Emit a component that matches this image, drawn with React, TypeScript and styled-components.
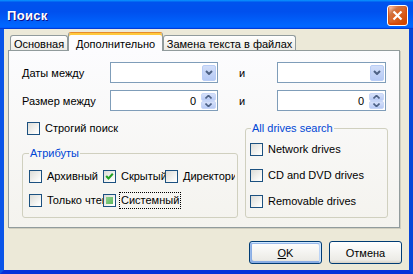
import React from "react";
import styled, { createGlobalStyle, css } from "styled-components";

const GlobalStyle = createGlobalStyle`
  html, body {
    margin: 0;
    padding: 0;
  }
  body {
    font-family: "Liberation Sans", Arial, sans-serif;
    font-size: 11px;
    color: #000;
  }
`;

const Window = styled.div`
  width: 413px;
  height: 274px;
  display: flex;
  flex-direction: column;
`;

const TitleBar = styled.div`
  height: 29px;
  flex: none;
  box-sizing: border-box;
  display: flex;
  align-items: center;
  justify-content: space-between;
  padding: 1px 5px 0 7px;
  background: linear-gradient(
    180deg,
    #0997ff,
    #0053ee 8%,
    #0050ee 40%,
    #0066ff 88%,
    #0066ff 93%,
    #005bff 95%,
    #003dd7 96%,
    #003dd7
  );
`;

const Title = styled.span`
  color: #fff;
  font: bold 13px "Liberation Sans", Arial, sans-serif;
  text-shadow: 1px 1px #0f1089;
  letter-spacing: 0.3px;
`;

const CloseButton = styled.div`
  width: 21px;
  height: 21px;
  box-sizing: border-box;
  border: 1px solid #fff;
  border-radius: 3px;
  display: flex;
  align-items: center;
  justify-content: center;
  background: radial-gradient(
    circle at 90% 90%,
    #cc4600 0,
    #dc6527 55%,
    #cd7546 70%,
    #ffccb2 90%,
    #fff 100%
  );
  box-shadow: inset 0 -1px 2px 1px #da4600;
`;

const Body = styled.div`
  flex: 1;
  background: #ece9d8;
  border-left: 4px solid #0a55e8;
  border-right: 4px solid #0846d8;
  border-bottom: 4px solid #0831d9;
  padding: 3px 0 6px 0;
  display: flex;
  flex-direction: column;
`;

const TabStrip = styled.div`
  display: flex;
  align-items: flex-end;
  height: 19px;
  margin: 0 0 -1px 4px;
  padding-left: 2px;
`;

const Tab = styled.div<{ $active?: boolean; $w: number }>`
  width: ${(p) => p.$w}px;
  box-sizing: border-box;
  height: ${(p) => (p.$active ? 19 : 15)}px;
  margin-bottom: ${(p) => (p.$active ? 0 : 1)}px;
  border: 1px solid #919b9c;
  border-bottom: none;
  border-radius: 3px 3px 0 0;
  display: flex;
  align-items: center;
  justify-content: center;
  padding-top: 1px;
  white-space: nowrap;
  background: linear-gradient(180deg, #fff, #f3f2ed 60%, #ecebe6);
  ${(p) =>
    p.$active &&
    css`
      position: relative;
      z-index: 1;
      padding-top: 3px;
      border-top-color: #e68b2c;
      background: #fcfcfe;
      box-shadow: inset 0 2px #ffc83c;
    `}
`;

const Panel = styled.div`
  margin-left: 4px;
  width: 392px;
  height: 178px;
  box-sizing: border-box;
  border: 1px solid #919b9c;
  background: linear-gradient(180deg, #fcfcfe, #f4f3ee);
  box-shadow: 1px 1px 0 #d0cebf;
  padding: 11px 0 0 13px;
`;

const FieldGrid = styled.div`
  display: grid;
  grid-template-columns: 88px 108px 59px 109px;
  grid-auto-rows: 21px;
  row-gap: 7px;
  align-items: center;
`;

const FieldLabel = styled.span<{ $indent?: number }>`
  padding-left: ${(p) => p.$indent ?? 0}px;
  white-space: nowrap;
`;

const InputBox = styled.div`
  height: 21px;
  box-sizing: border-box;
  border: 1px solid #7f9db9;
  background: #fff;
  display: flex;
  align-items: center;
  justify-content: flex-end;
  padding-right: 1px;
`;

const DropButton = styled.div`
  width: 14px;
  height: 16px;
  box-sizing: border-box;
  border: 1px solid #b9cdf6;
  border-radius: 2px;
  background: linear-gradient(180deg, #d2def9, #b5c9f5);
  display: flex;
  align-items: center;
  justify-content: center;
`;

const SpinValue = styled.span`
  margin-right: 5px;
`;

const SpinButtons = styled.div`
  width: 15px;
  height: 16px;
  display: flex;
  flex-direction: column;
`;

const SpinHalf = styled.div`
  flex: 1;
  box-sizing: border-box;
  border: 1px solid #c7d6f7;
  border-radius: 2px;
  background: linear-gradient(180deg, #d6e1fa, #b7caf5);
  display: flex;
  align-items: center;
  justify-content: center;
`;

const Lower = styled.div`
  display: flex;
  gap: 7px;
  margin-top: 11px;
`;

const LeftCol = styled.div`
  width: 216px;
  display: flex;
  flex-direction: column;
  gap: 12px;
`;

const StrictRow = styled.div`
  margin-left: 5px;
`;

const Group = styled.fieldset<{ $h: number; $w?: number; $pad: string }>`
  margin: 0;
  min-inline-size: 0;
  box-sizing: border-box;
  height: ${(p) => p.$h}px;
  ${(p) => p.$w && `width: ${p.$w}px;`}
  padding: ${(p) => p.$pad};
  border: 1px solid #d0d0bf;
  border-radius: 3px;
`;

const Legend = styled.legend<{ $ml: number }>`
  margin-left: ${(p) => p.$ml}px;
  padding: 0 1px;
  line-height: 13px;
  color: #0046d5;
`;

const AttrGrid = styled.div`
  display: grid;
  grid-template-columns: 74px 62px 70px;
  row-gap: 11px;
`;

const DriveList = styled.div`
  display: flex;
  flex-direction: column;
  gap: 13px;
`;

const CheckItem = styled.label<{ $w?: number; $span?: number }>`
  display: flex;
  align-items: center;
  gap: 5px;
  height: 13px;
  line-height: 13px;
  white-space: nowrap;
  overflow: hidden;
  ${(p) => p.$w && `width: ${p.$w}px;`}
  ${(p) => p.$span && `grid-column: span ${p.$span}; overflow: visible;`}
`;

const Box = styled.span`
  flex: none;
  width: 13px;
  height: 13px;
  box-sizing: border-box;
  border: 1px solid #1c5180;
  background: linear-gradient(135deg, #dcdcd7, #fbfbf9 80%, #fff);
  display: flex;
  align-items: center;
  justify-content: center;
`;

const Mixed = styled.span`
  width: 7px;
  height: 7px;
  background: linear-gradient(135deg, #8fd18f, #5cb85c);
`;

const FocusText = styled.span`
  outline: 1px dotted #000;
  margin-left: -1px;
  padding: 0 1px;
  line-height: 15px;
`;

const ButtonRow = styled.div`
  display: flex;
  justify-content: flex-end;
  gap: 7px;
  margin-top: 13px;
  padding-right: 7px;
`;

const Button = styled.div<{ $default?: boolean }>`
  width: 73px;
  height: 23px;
  box-sizing: border-box;
  border: 1px solid #003c74;
  border-radius: 3px;
  display: flex;
  align-items: center;
  justify-content: center;
  background: linear-gradient(180deg, #fff, #ecebe6 86%, #d6d0c5);
  ${(p) =>
    p.$default &&
    css`
      box-shadow: inset -1px 1px #cee7ff, inset 1px 2px #98b8ea,
        inset -2px 2px #bcd4f6, inset 1px -1px #89ade4,
        inset 2px -2px #89ade4;
    `}
`;

const Chevron = () => (
  <svg width="8" height="5" viewBox="0 0 8 5">
    <polyline points="1,1 4,4 7,1" fill="none" stroke="#4d6185" strokeWidth="2" />
  </svg>
);

const SpinArrow = ({ up }: { up?: boolean }) => (
  <svg width="7" height="4" viewBox="0 0 7 4">
    <polyline
      points={up ? "0.5,3.5 3.5,0.5 6.5,3.5" : "0.5,0.5 3.5,3.5 6.5,0.5"}
      fill="none"
      stroke="#4d6185"
      strokeWidth="1.6"
    />
  </svg>
);

const Combo = () => (
  <InputBox>
    <DropButton>
      <Chevron />
    </DropButton>
  </InputBox>
);

const Spin = () => (
  <InputBox>
    <SpinValue>0</SpinValue>
    <SpinButtons>
      <SpinHalf>
        <SpinArrow up />
      </SpinHalf>
      <SpinHalf>
        <SpinArrow />
      </SpinHalf>
    </SpinButtons>
  </InputBox>
);

type CheckState = "off" | "on" | "mixed";

const Check = ({
  state = "off",
  w,
  span,
  focus,
  children,
}: {
  state?: CheckState;
  w?: number;
  span?: number;
  focus?: boolean;
  children: React.ReactNode;
}) => (
  <CheckItem $w={w} $span={span}>
    <Box>
      {state === "on" && (
        <svg width="9" height="9" viewBox="0 0 9 9">
          <polyline
            points="1.2,4 3.5,6.5 7.8,1.8"
            fill="none"
            stroke="#21a121"
            strokeWidth="2"
          />
        </svg>
      )}
      {state === "mixed" && <Mixed />}
    </Box>
    {focus ? <FocusText>{children}</FocusText> : <span>{children}</span>}
  </CheckItem>
);

export default function App() {
  return (
    <>
      <GlobalStyle />
      <Window>
        <TitleBar>
          <Title>Поиск</Title>
          <CloseButton>
            <svg width="11" height="11" viewBox="0 0 11 11">
              <path d="M1.5 1.5 L9.5 9.5 M9.5 1.5 L1.5 9.5" stroke="#fff" strokeWidth="2.2" />
            </svg>
          </CloseButton>
        </TitleBar>
        <Body>
          <TabStrip>
            <Tab $w={58}>Основная</Tab>
            <Tab $w={95} $active>
              Дополнительно
            </Tab>
            <Tab $w={133}>Замена текста в файлах</Tab>
          </TabStrip>
          <Panel>
            <FieldGrid>
              <FieldLabel>Даты между</FieldLabel>
              <Combo />
              <FieldLabel $indent={21}>и</FieldLabel>
              <Combo />
              <FieldLabel>Размер между</FieldLabel>
              <Spin />
              <FieldLabel $indent={21}>и</FieldLabel>
              <Spin />
            </FieldGrid>
            <Lower>
              <LeftCol>
                <StrictRow>
                  <Check>Строгий поиск</Check>
                </StrictRow>
                <Group $h={71} $pad="10px 6px 0">
                  <Legend $ml={0}>Атрибуты</Legend>
                  <AttrGrid>
                    <Check w={74}>Архивный</Check>
                    <Check w={62} state="on">
                      Скрытый
                    </Check>
                    <Check w={70}>Директория</Check>
                    <Check w={74}>Только чтение</Check>
                    <Check state="mixed" span={2} focus>
                      Системный
                    </Check>
                  </AttrGrid>
                </Group>
              </LeftCol>
              <Group $h={96} $w={143} $pad="8px 4px 0">
                <Legend $ml={1}>All drives search</Legend>
                <DriveList>
                  <Check>Network drives</Check>
                  <Check>CD and DVD drives</Check>
                  <Check>Removable drives</Check>
                </DriveList>
              </Group>
            </Lower>
          </Panel>
          <ButtonRow>
            <Button $default>
              <span>
                <u>O</u>K
              </span>
            </Button>
            <Button>Отмена</Button>
          </ButtonRow>
        </Body>
      </Window>
    </>
  );
}
